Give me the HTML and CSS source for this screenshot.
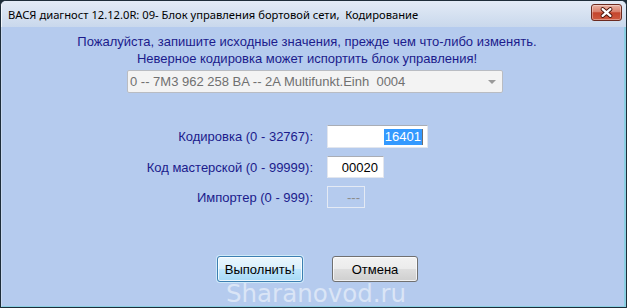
FILE: index.html
```html
<!DOCTYPE html>
<html lang="ru">
<head>
    <meta charset="UTF-8">
    <meta name="viewport" content="width=device-width, initial-scale=1.0">
    <title>ВАСЯ диагност - Кодирование</title>
    <link rel="stylesheet" href="styles.css">
</head>
<body>
    <div class="window">
        <div class="titlebar">
            <span class="title">ВАСЯ диагност 12.12.0R: 09- Блок управления бортовой сети,&nbsp; Кодирование</span>
            <button class="close" title="Закрыть">
                <svg width="30" height="17" viewBox="0 0 30 17">
                    <path d="M11 5 L19 12 M19 5 L11 12" stroke="#4a1208" stroke-width="4.2" stroke-linecap="round"/>
                    <path d="M11 5 L19 12 M19 5 L11 12" stroke="#ffffff" stroke-width="2.4" stroke-linecap="round"/>
                </svg>
            </button>
        </div>

        <div class="client">
            <p class="notice">Пожалуйста, запишите исходные значения, прежде чем что-либо изменять.</p>
            <p class="notice">Неверное кодировка может испортить блок управления!</p>

            <div class="combo">
                <span class="combo-text">0 -- 7M3 962 258 BA -- 2A Multifunkt.Einh  0004</span>
                <span class="combo-arrow"></span>
            </div>

            <div class="fields">
                <label class="field-label">Кодировка (0 - 32767):</label>
                <div class="field field-coding"><span class="selected">16401</span><span class="caret"></span></div>

                <label class="field-label">Код мастерской (0 - 99999):</label>
                <div class="field field-workshop">00020</div>

                <label class="field-label">Импортер (0 - 999):</label>
                <div class="field field-importer">---</div>
            </div>

            <div class="actions">
                <button class="btn btn-default">Выполнить!</button>
                <button class="btn">Отмена</button>
            </div>

            <div class="watermark">Sharanovod.ru</div>
        </div>
    </div>
</body>
</html>
```

FILE: styles.css
```css
body {
    margin: 0;
    background-color: #1d2c38;
    font-family: 'Liberation Sans', Arial, sans-serif;
    font-size: 13px;
}

.window {
    width: 627px;
    height: 308px;
    box-sizing: border-box;
    border: 1px solid #1e2d39;
    border-radius: 6px 6px 0 0;
    background-color: #d4e0ef;
    display: flex;
    flex-direction: column;
    overflow: hidden;
}

.titlebar {
    height: 26px;
    flex-shrink: 0;
    display: flex;
    align-items: flex-start;
    background: linear-gradient(#e3ebf6, #c9d8ec);
    border-left: 1px solid #f2f6fb;
}

.title {
    font-family: 'Noto Sans', sans-serif;
    font-size: 11.2px;
    color: #000;
    padding: 6px 0 0 6px;
    white-space: nowrap;
    line-height: 16px;
}

.close {
    margin: 3px 4px 0 auto;
    width: 31px;
    height: 17px;
    padding: 0;
    border: 1px solid #6c2a1f;
    border-radius: 3px;
    background: linear-gradient(#e9b2a3 0%, #d9806c 45%, #c4452c 52%, #cf5a40 100%);
    box-shadow: inset 0 0 0 1px rgba(255,255,255,0.35);
    display: flex;
    align-items: center;
    justify-content: center;
}

.close svg {
    display: block;
}

.client {
    position: relative;
    flex: 1;
    background-color: #b5cbee;
    border-left: 1px solid #c9d9f0;
    border-right: 2px solid #8acfe2;
    border-bottom: 1px solid #8acfe2;
    padding-top: 6px;
}

.notice {
    margin: 0;
    color: #1b1b8c;
    line-height: 17px;
    white-space: nowrap;
    text-align: center;
    padding-right: 12px;
}

.combo {
    margin: 3px 0 0 125px;
    width: 376px;
    height: 23px;
    box-sizing: border-box;
    border: 1px solid #b9bcc2;
    border-radius: 2px;
    background-color: #f3f3f3;
    display: flex;
    align-items: center;
    padding: 0 5px 0 2px;
}

.combo-text {
    color: #707070;
    white-space: pre;
    flex: 1;
}

.combo-arrow {
    width: 0;
    height: 0;
    border-left: 4px solid transparent;
    border-right: 4px solid transparent;
    border-top: 4px solid #9a9a9a;
    margin-right: 1px;
}

.fields {
    margin-top: 32px;
    display: grid;
    grid-template-columns: 311px auto;
    column-gap: 14px;
    row-gap: 8px;
    justify-content: start;
    align-items: center;
}

.field-label {
    text-align: right;
    color: #1b1b8c;
    white-space: nowrap;
}

.field {
    box-sizing: border-box;
    height: 22px;
    display: flex;
    align-items: center;
    justify-content: flex-end;
    background-color: #fff;
    border: 1px solid #e2e6ee;
    border-top-color: #a9adb5;
    color: #000;
}

.field-coding {
    width: 101px;
    height: 23px;
    padding-right: 4px;
}

.field-workshop {
    width: 57px;
    padding-right: 5px;
}

.field-importer {
    width: 38px;
    padding-right: 4px;
    background-color: transparent;
    border-color: #e4eaf4;
    color: #8c8c8c;
}

.selected {
    background-color: #3399ff;
    color: #fff;
    line-height: 16px;
    padding: 0 1px;
}

.caret {
    width: 1px;
    height: 16px;
    background-color: #6e6e6e;
}

.actions {
    margin-top: 48px;
    padding-left: 215px;
    display: flex;
    gap: 29px;
}

.btn {
    height: 26px;
    width: 86px;
    box-sizing: border-box;
    font-family: 'Liberation Sans', Arial, sans-serif;
    font-size: 13px;
    color: #000;
    border: 1px solid #707070;
    border-radius: 3px;
    background: linear-gradient(#f2f2f2 0%, #ebebeb 48%, #dddddd 52%, #cfcfcf 100%);
    box-shadow: inset 0 0 0 1px rgba(255,255,255,0.7);
    padding: 0;
}

.btn-default {
    border-color: #3c7fb1;
    background: linear-gradient(#eaf6fd 0%, #d9f0fc 48%, #bee6fd 52%, #a7d9f5 100%);
    box-shadow: inset 0 0 0 1px rgba(255,255,255,0.8), 0 0 0 1px #cfeafa;
}

.watermark {
    position: absolute;
    left: 224px;
    top: 253px;
    font-family: 'DejaVu Sans', sans-serif;
    font-size: 24.5px;
    line-height: 28px;
    color: rgba(255,255,255,0.5);
    pointer-events: none;
}
```
